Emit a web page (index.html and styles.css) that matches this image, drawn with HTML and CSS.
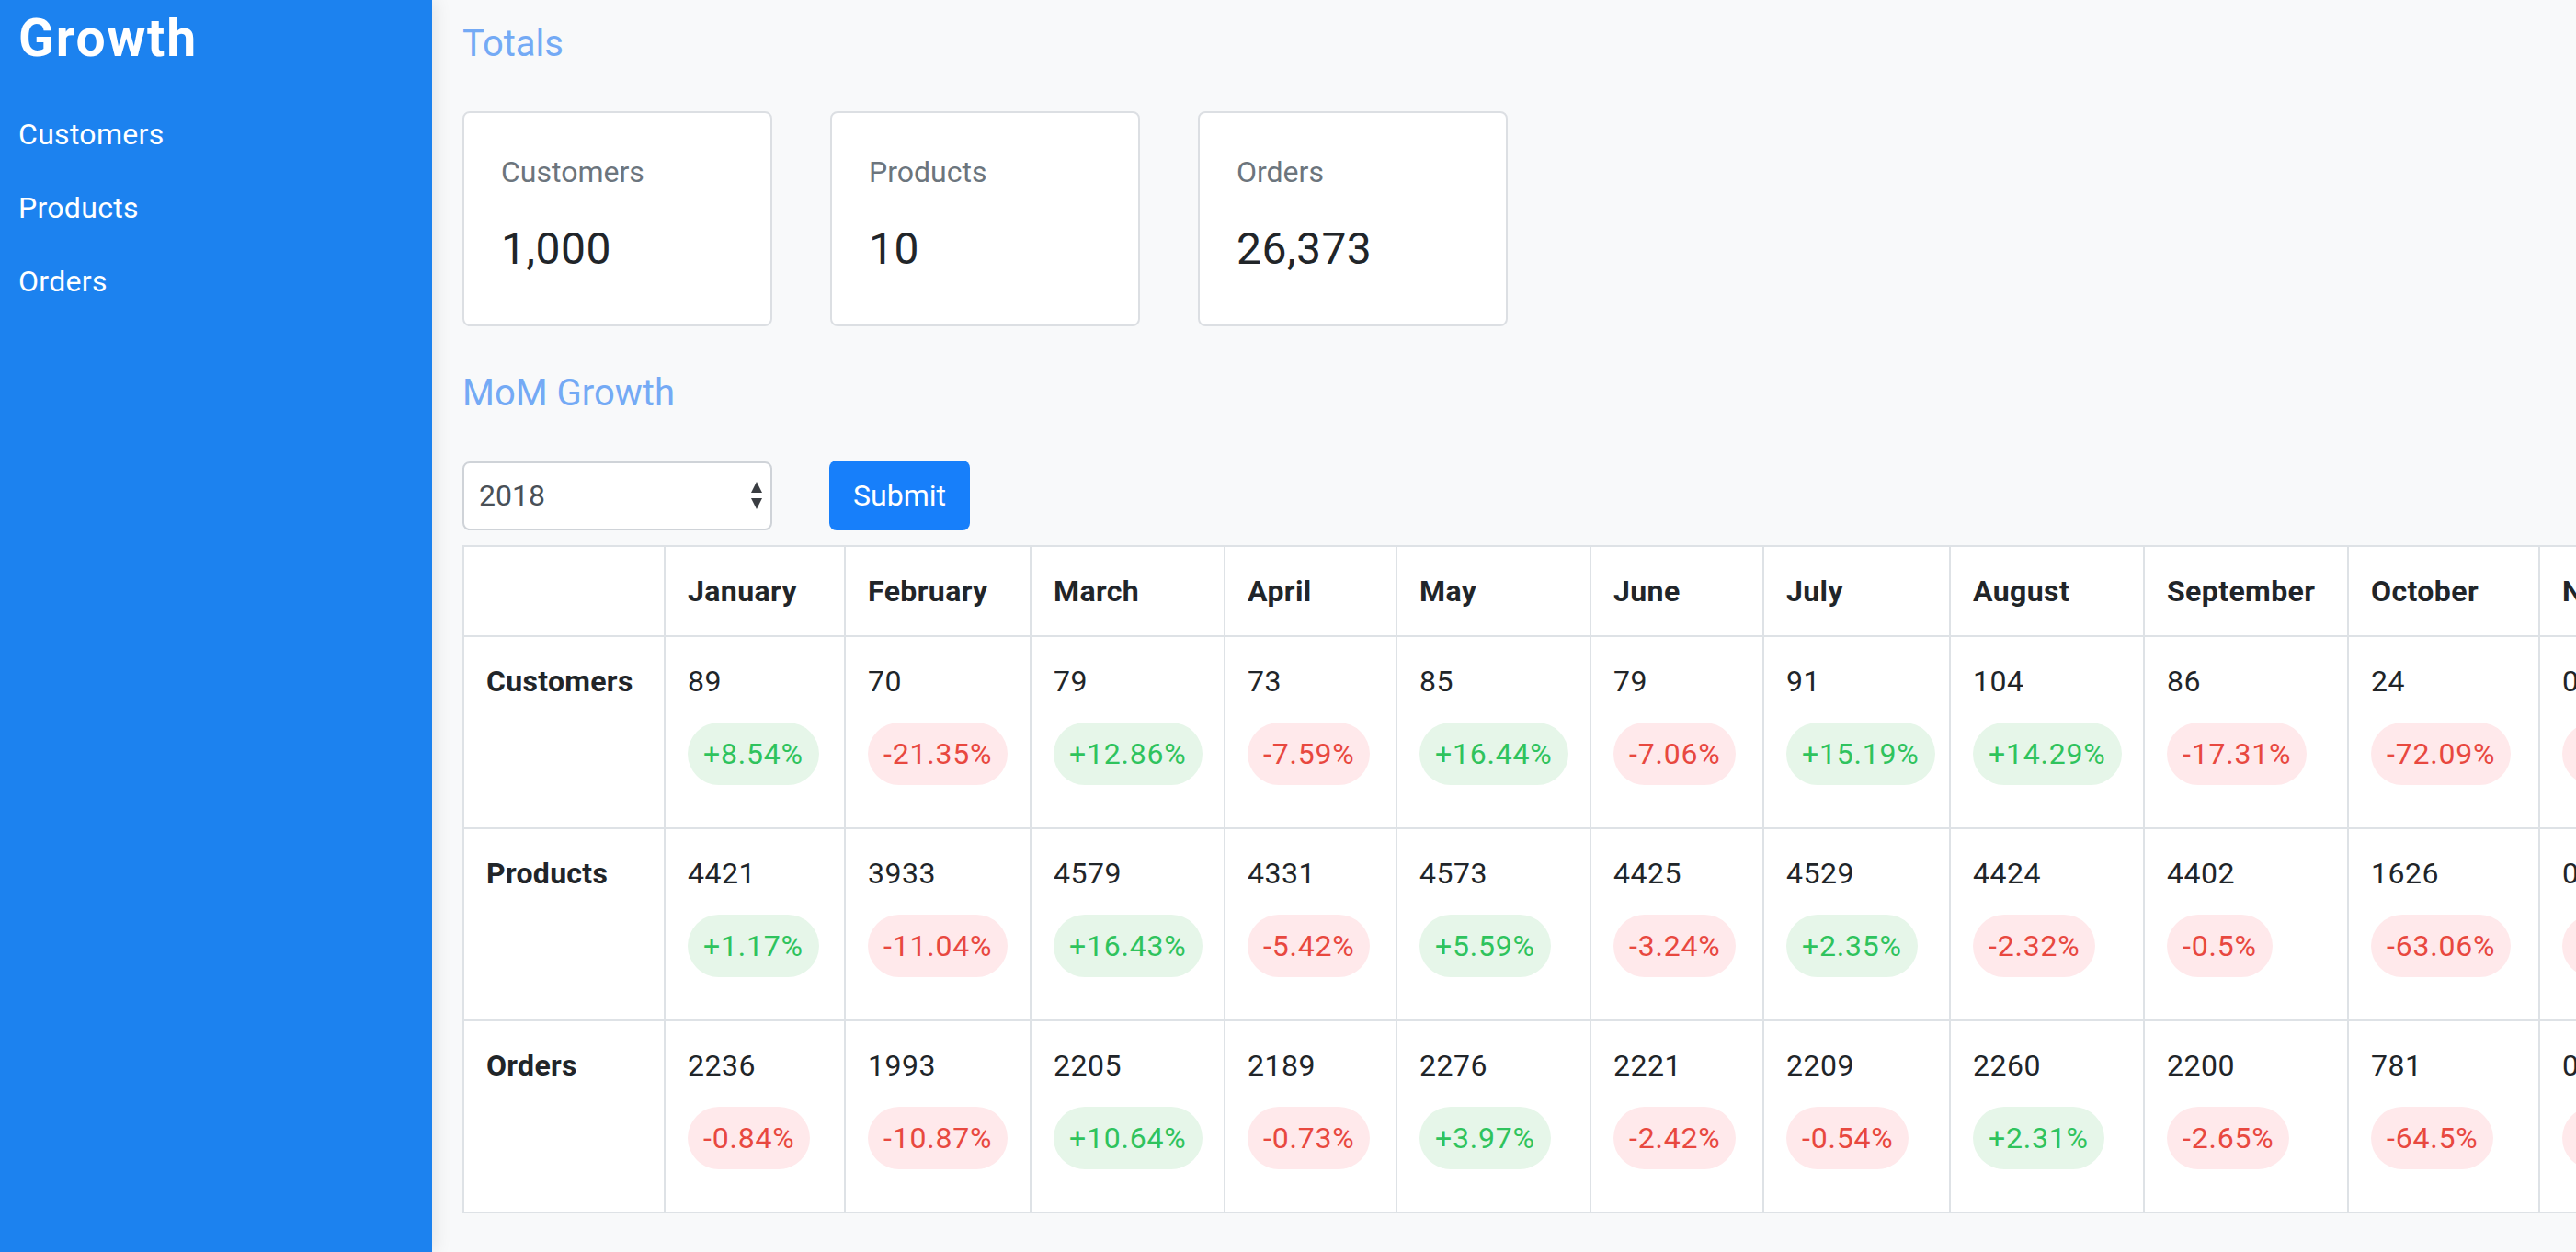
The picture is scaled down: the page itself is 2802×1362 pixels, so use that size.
FILE: index.html
```html
<!DOCTYPE html>
<html lang="en">
<head>
<meta charset="utf-8">
<title>Growth</title>
<link rel="stylesheet" href="styles.css">
</head>
<body>
<div class="layout">
  <aside class="sidebar">
    <div class="brand">Growth</div>
    <nav class="nav">
      <a class="nav-link" href="#">Customers</a>
      <a class="nav-link" href="#">Products</a>
      <a class="nav-link" href="#">Orders</a>
    </nav>
  </aside>
  <main class="main">
    <h5 class="section-title">Totals</h5>
    <div class="cards">
      <div class="card"><div class="card-label">Customers</div><div class="card-value">1,000</div></div>
      <div class="card"><div class="card-label">Products</div><div class="card-value">10</div></div>
      <div class="card"><div class="card-label">Orders</div><div class="card-value">26,373</div></div>
    </div>
    <h5 class="section-title">MoM Growth</h5>
    <form class="filter">
      <div class="select-wrap">
        <select class="select"><option>2018</option><option>2017</option></select>
        <svg class="select-arrows" width="14" height="32" viewBox="0 0 14 32"><path d="M7 0 L13 12 L1 12 Z" fill="#3a3d42"/><path d="M1 18 L13 18 L7 30 Z" fill="#3a3d42"/></svg>
      </div>
      <button class="btn" type="button">Submit</button>
    </form>
    <table class="grid">
      <colgroup>
        <col class="c-label"><col class="c-jan"><col class="c-feb"><col class="c-mar"><col class="c-apr"><col class="c-may"><col class="c-jun"><col class="c-jul"><col class="c-aug"><col class="c-sep"><col class="c-oct"><col class="c-nov"><col class="c-dec">
      </colgroup>
      <thead>
        <tr><th></th><th>January</th><th>February</th><th>March</th><th>April</th><th>May</th><th>June</th><th>July</th><th>August</th><th>September</th><th>October</th><th>November</th><th>December</th></tr>
      </thead>
      <tbody>
        <tr>
          <th class="row-label">Customers</th>
          <td><div class="val">89</div><span class="badge up">+8.54%</span></td>
          <td><div class="val">70</div><span class="badge down">-21.35%</span></td>
          <td><div class="val">79</div><span class="badge up">+12.86%</span></td>
          <td><div class="val">73</div><span class="badge down">-7.59%</span></td>
          <td><div class="val">85</div><span class="badge up">+16.44%</span></td>
          <td><div class="val">79</div><span class="badge down">-7.06%</span></td>
          <td><div class="val">91</div><span class="badge up">+15.19%</span></td>
          <td><div class="val">104</div><span class="badge up">+14.29%</span></td>
          <td><div class="val">86</div><span class="badge down">-17.31%</span></td>
          <td><div class="val">24</div><span class="badge down">-72.09%</span></td>
          <td><div class="val">0</div><span class="badge down">-100%</span></td>
          <td><div class="val">0</div><span class="badge down">0%</span></td>
        </tr>
        <tr>
          <th class="row-label">Products</th>
          <td><div class="val">4421</div><span class="badge up">+1.17%</span></td>
          <td><div class="val">3933</div><span class="badge down">-11.04%</span></td>
          <td><div class="val">4579</div><span class="badge up">+16.43%</span></td>
          <td><div class="val">4331</div><span class="badge down">-5.42%</span></td>
          <td><div class="val">4573</div><span class="badge up">+5.59%</span></td>
          <td><div class="val">4425</div><span class="badge down">-3.24%</span></td>
          <td><div class="val">4529</div><span class="badge up">+2.35%</span></td>
          <td><div class="val">4424</div><span class="badge down">-2.32%</span></td>
          <td><div class="val">4402</div><span class="badge down">-0.5%</span></td>
          <td><div class="val">1626</div><span class="badge down">-63.06%</span></td>
          <td><div class="val">0</div><span class="badge down">-100%</span></td>
          <td><div class="val">0</div><span class="badge down">0%</span></td>
        </tr>
        <tr>
          <th class="row-label">Orders</th>
          <td><div class="val">2236</div><span class="badge down">-0.84%</span></td>
          <td><div class="val">1993</div><span class="badge down">-10.87%</span></td>
          <td><div class="val">2205</div><span class="badge up">+10.64%</span></td>
          <td><div class="val">2189</div><span class="badge down">-0.73%</span></td>
          <td><div class="val">2276</div><span class="badge up">+3.97%</span></td>
          <td><div class="val">2221</div><span class="badge down">-2.42%</span></td>
          <td><div class="val">2209</div><span class="badge down">-0.54%</span></td>
          <td><div class="val">2260</div><span class="badge up">+2.31%</span></td>
          <td><div class="val">2200</div><span class="badge down">-2.65%</span></td>
          <td><div class="val">781</div><span class="badge down">-64.5%</span></td>
          <td><div class="val">0</div><span class="badge down">-100%</span></td>
          <td><div class="val">0</div><span class="badge down">0%</span></td>
        </tr>
      </tbody>
    </table>
  </main>
</div>
</body>
</html>
```
FILE: styles.css
```css
* { box-sizing: border-box; }
html, body { margin: 0; padding: 0; }
body {
  font-family: Roboto, "Liberation Sans", Arial, sans-serif;
  color: #212529;
  background: #f8f9fa;
  font-size: 32px;
  line-height: 48px;
  overflow: hidden;
}
.layout {
  display: flex;
  min-height: 100vh;
}
.sidebar {
  flex: 0 0 470px;
  width: 470px;
  background: #1c82ef;
  color: #fff;
  padding: 8px 0 0 20px;
  box-shadow: 3px 0 18px rgba(0, 0, 0, 0.09);
  position: relative;
  z-index: 1;
}
.brand {
  font-size: 57px;
  line-height: 68px;
  font-weight: 700;
  letter-spacing: 1.8px;
}
.nav {
  display: flex;
  flex-direction: column;
  margin-top: 30px;
}
.nav-link {
  color: #fff;
  text-decoration: none;
  padding: 16px 0;
  line-height: 48px;
  letter-spacing: 0.3px;
}
.main {
  flex: 1;
  min-width: 0;
  overflow: hidden;
  padding: 24px 0 0 33px;
}
.section-title {
  margin: 0 0 49px;
  font-size: 40px;
  line-height: 48px;
  font-weight: 400;
  color: #74aaf5;
}
.cards {
  display: flex;
  gap: 63px;
  margin-bottom: 49px;
}
.card {
  width: 337px;
  height: 234px;
  background: #fff;
  border: 2px solid #dcdfe3;
  border-radius: 8px;
  padding: 40px;
}
.card-label {
  color: #6c757d;
  line-height: 48px;
  margin-bottom: 31px;
}
.card-value {
  font-size: 48px;
  line-height: 58px;
  letter-spacing: 0.5px;
}
.filter {
  display: flex;
  gap: 62px;
  align-items: center;
  margin-bottom: 16px;
}
.select-wrap {
  position: relative;
  width: 337px;
  height: 75px;
}
.select {
  appearance: none;
  -webkit-appearance: none;
  width: 100%;
  height: 100%;
  border: 2px solid #cfd3d8;
  border-radius: 8px;
  background: #fff;
  padding: 0 16px;
  font-family: inherit;
  font-size: 32px;
  color: #495057;
}
.select-arrows {
  position: absolute;
  right: 10px;
  top: 22px;
}
.btn {
  width: 153px;
  height: 76px;
  border: 0;
  border-radius: 8px;
  background: #177ffa;
  color: #fff;
  font-family: inherit;
  font-size: 32px;
  padding: 0;
}
.grid {
  border-collapse: collapse;
  table-layout: fixed;
  width: 2660px;
  background: #fff;
}
.grid th, .grid td {
  border: 2px solid #dee2e6;
  padding: 24px;
  text-align: left;
  vertical-align: top;
  line-height: 48px;
  white-space: nowrap;
}
.grid thead th {
  font-weight: 700;
  letter-spacing: 0.4px;
}
.grid .row-label { font-weight: 700; letter-spacing: 0.3px; }
.c-label { width: 219px; }
.c-jan { width: 196px; }
.c-feb { width: 202px; }
.c-mar { width: 211px; }
.c-apr { width: 187px; }
.c-may { width: 211px; }
.c-jun { width: 188px; }
.c-jul { width: 203px; }
.c-aug { width: 211px; }
.c-sep { width: 222px; }
.c-oct { width: 208px; }
.c-nov { width: 200px; }
.c-dec { width: 200px; }
.val { line-height: 48px; letter-spacing: 0.5px; }
.badge {
  display: inline-block;
  margin: 21px 0 22px;
  padding: 10px 17px;
  border-radius: 34px;
  line-height: 48px;
  letter-spacing: 0.8px;
}
.badge.up { background: #e6f6e9; color: #2fc35d; }
.badge.down { background: #ffe9eb; color: #e8483f; }
```
